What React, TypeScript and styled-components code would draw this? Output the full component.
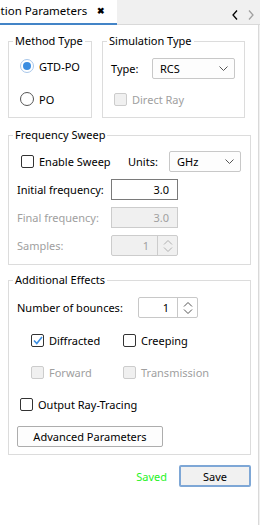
import styled, { createGlobalStyle } from "styled-components";

const GlobalStyle = createGlobalStyle`
  html, body {
    margin: 0;
    padding: 0;
    background: #f0f0f0;
  }
  body {
    font-family: "Noto Sans", "Open Sans", sans-serif;
    font-size: 11px;
    color: #000;
  }
`;

const Window = styled.div`
  width: 260px;
  height: 525px;
  display: flex;
  flex-direction: column;
  overflow: hidden;
`;

const TabBar = styled.div`
  height: 25px;
  display: flex;
  align-items: stretch;
  background: #f0f0f0;
  box-sizing: border-box;
`;

const TabViewport = styled.div`
  width: 117px;
  overflow: hidden;
  display: flex;
`;

const ActiveTab = styled.div`
  flex: none;
  display: flex;
  align-items: center;
  gap: 10px;
  height: 25px;
  padding-right: 18px;
  background: #fff;
  border-bottom: 2px solid #4384c7;
  box-sizing: border-box;
  white-space: nowrap;
  font-size: 11.5px;
  line-height: 14px;
  padding-bottom: 2px;
`;

const CloseMark = styled.span`
  font-weight: bold;
  font-size: 9px;
`;

const TabRest = styled.div`
  flex: 1;
  display: flex;
  align-items: center;
  justify-content: flex-end;
  gap: 10px;
  padding: 6px 6px 0 0;
  border-bottom: 1px solid #d9d9d9;
`;

const Panel = styled.div`
  flex: 1;
  width: 259px;
  background: #fff;
  border-right: 1px solid #d9d9d9;
  box-sizing: border-box;
  padding: 9px 7px 0 8px;
  display: flex;
  flex-direction: column;
`;

const TopRow = styled.div`
  display: flex;
  gap: 10px;
`;

const Group = styled.fieldset<{ $width: number; $gapTop?: number }>`
  margin: ${(p) => p.$gapTop ?? 0}px 0 0 0;
  padding: 0;
  min-width: 0;
  width: ${(p) => p.$width}px;
  box-sizing: border-box;
  border: 1px solid #dcdcdc;
`;

const Legend = styled.legend`
  margin-left: 4px;
  padding: 0 2px;
  line-height: 14px;
  height: 14px;
`;

const GroupBody = styled.div<{ $pt: number; $pb: number; $gap: number }>`
  display: flex;
  flex-direction: column;
  gap: ${(p) => p.$gap}px;
  padding: ${(p) => p.$pt}px 8px ${(p) => p.$pb}px 8px;
`;

const Row = styled.div<{ $h?: number; $indent?: number }>`
  display: flex;
  align-items: center;
  height: ${(p) => p.$h ?? 20}px;
  padding-left: ${(p) => p.$indent ?? 0}px;
`;

const Label = styled.span<{ $w?: number; $disabled?: boolean }>`
  width: ${(p) => (p.$w ? `${p.$w}px` : "auto")};
  flex: none;
  color: ${(p) => (p.$disabled ? "#a0a0a0" : "#000")};
  white-space: nowrap;
`;

const CheckItem = styled.label<{ $w?: number; $disabled?: boolean }>`
  display: flex;
  align-items: center;
  gap: 5px;
  width: ${(p) => (p.$w ? `${p.$w}px` : "auto")};
  color: ${(p) => (p.$disabled ? "#a0a0a0" : "#000")};
  white-space: nowrap;
`;

const Box = styled.span<{ $disabled?: boolean }>`
  width: 13px;
  height: 13px;
  box-sizing: border-box;
  border: 1px solid ${(p) => (p.$disabled ? "#cccccc" : "#333333")};
  border-radius: 2px;
  background: ${(p) => (p.$disabled ? "#f0f0f0" : "#fff")};
  display: flex;
  align-items: center;
  justify-content: center;
  flex: none;
`;

const Radio = styled.span<{ $on?: boolean }>`
  width: 14px;
  height: 14px;
  box-sizing: border-box;
  border-radius: 50%;
  border: 1px solid ${(p) => (p.$on ? "#a8c7ea" : "#555")};
  display: flex;
  align-items: center;
  justify-content: center;
  flex: none;
  &::after {
    content: "";
    width: 8px;
    height: 8px;
    border-radius: 50%;
    background: ${(p) => (p.$on ? "#3b8de0" : "transparent")};
  }
`;

const Select = styled.div<{ $w: number }>`
  width: ${(p) => p.$w}px;
  height: 21px;
  box-sizing: border-box;
  border: 1px solid #c8c8c8;
  border-radius: 2px;
  background: #fdfdfd;
  display: flex;
  align-items: center;
  justify-content: space-between;
  padding: 0 6px 0 7px;
`;

const TextBox = styled.div<{ $w: number; $disabled?: boolean }>`
  width: ${(p) => p.$w}px;
  height: 21px;
  box-sizing: border-box;
  border: 1px solid ${(p) => (p.$disabled ? "#cccccc" : "#7a7a7a")};
  background: ${(p) => (p.$disabled ? "#f0f0f0" : "#fff")};
  color: ${(p) => (p.$disabled ? "#a0a0a0" : "#000")};
  display: flex;
  align-items: center;
  justify-content: flex-end;
  padding-right: 8px;
`;

const Spin = styled.div<{ $w: number; $disabled?: boolean }>`
  width: ${(p) => p.$w}px;
  height: 21px;
  box-sizing: border-box;
  border: 1px solid ${(p) => (p.$disabled ? "#cccccc" : "#c8c8c8")};
  border-radius: 2px;
  background: ${(p) => (p.$disabled ? "#f0f0f0" : "#fff")};
  color: ${(p) => (p.$disabled ? "#a0a0a0" : "#000")};
  display: flex;
  align-items: stretch;
`;

const SpinValue = styled.div`
  flex: 1;
  display: flex;
  align-items: center;
  justify-content: flex-end;
  padding-right: 8px;
`;

const SpinButtons = styled.div<{ $disabled?: boolean }>`
  width: 19px;
  border-left: 1px solid ${(p) => (p.$disabled ? "#cccccc" : "#c8c8c8")};
  display: flex;
  align-items: center;
  justify-content: center;
`;

const Button = styled.button<{ $w: number; $default?: boolean }>`
  width: ${(p) => p.$w}px;
  height: ${(p) => (p.$default ? 22 : 21)}px;
  box-sizing: border-box;
  font: inherit;
  color: #000;
  padding: 0;
  border-radius: 2px;
  border: ${(p) => (p.$default ? "2px solid #7ea7d6" : "1px solid #adadad")};
  background: ${(p) => (p.$default ? "#f1f1f1" : "#fdfdfd")};
`;

const Footer = styled.div`
  display: flex;
  justify-content: flex-end;
  align-items: center;
  gap: 12px;
  margin-top: 10px;
`;

const SavedText = styled.span`
  color: #1ff21f;
`;

const Chevron = ({ dir, color }: { dir: "left" | "right" | "down"; color: string }) => {
  if (dir === "down")
    return (
      <svg width="9" height="5" viewBox="0 0 9 5">
        <path d="M0.5 0.5 L4.5 4.5 L8.5 0.5" fill="none" stroke={color} strokeWidth="1" />
      </svg>
    );
  return (
    <svg width="6" height="10" viewBox="0 0 6 10">
      <path
        d={dir === "left" ? "M5 0.5 L1 5 L5 9.5" : "M1 0.5 L5 5 L1 9.5"}
        fill="none"
        stroke={color}
        strokeWidth="1.3"
      />
    </svg>
  );
};

const SpinArrows = ({ color }: { color: string }) => (
  <svg width="10" height="14" viewBox="0 0 10 14">
    <path d="M1 5.5 L5 1.5 L9 5.5 M1 8.5 L5 12.5 L9 8.5" fill="none" stroke={color} strokeWidth="1" />
  </svg>
);

const Check = () => (
  <svg width="10" height="9" viewBox="0 0 10 9">
    <path d="M1 4.5 L3.8 7.5 L9 1" fill="none" stroke="#3b8de0" strokeWidth="1.6" />
  </svg>
);

function App() {
  return (
    <Window>
      <GlobalStyle />
      <TabBar>
        <TabViewport>
          {/* tab strip is scrolled, so the start of the title is hidden */}
          <ActiveTab style={{ marginLeft: -36 }}>
            <span>Simulation Parameters</span>
            <CloseMark>✖</CloseMark>
          </ActiveTab>
        </TabViewport>
        <TabRest>
          <Chevron dir="left" color="#000" />
          <Chevron dir="right" color="#a0a0a0" />
        </TabRest>
      </TabBar>
      <Panel>
        <TopRow>
          <Group $width={84}>
            <Legend>Method Type</Legend>
            <GroupBody $pt={8} $pb={8} $gap={13}>
              <Row $indent={3}>
                <CheckItem>
                  <Radio $on />
                  GTD-PO
                </CheckItem>
              </Row>
              <Row $indent={3}>
                <CheckItem>
                  <Radio />
                  PO
                </CheckItem>
              </Row>
            </GroupBody>
          </Group>
          <Group $width={143}>
            <Legend>Simulation Type</Legend>
            <GroupBody $pt={10} $pb={7} $gap={10}>
              <Row $h={21}>
                <Label $w={41}>Type:</Label>
                <Select $w={83}>
                  <span>RCS</span>
                  <Chevron dir="down" color="#555" />
                </Select>
              </Row>
              <Row $indent={3}>
                <CheckItem $disabled>
                  <Box $disabled />
                  Direct Ray
                </CheckItem>
              </Row>
            </GroupBody>
          </Group>
        </TopRow>

        <Group $width={243} $gapTop={10}>
          <Legend>Frequency Sweep</Legend>
          <GroupBody $pt={9} $pb={8} $gap={7}>
            <Row $h={21} $indent={4}>
              <CheckItem $w={107}>
                <Box />
                Enable Sweep
              </CheckItem>
              <Label $w={41}>Units:</Label>
              <Select $w={72}>
                <span>GHz</span>
                <Chevron dir="down" color="#555" />
              </Select>
            </Row>
            <Row $h={21}>
              <Label $w={94}>Initial frequency:</Label>
              <TextBox $w={67}>3.0</TextBox>
            </Row>
            <Row $h={21}>
              <Label $w={94} $disabled>
                Final frequency:
              </Label>
              <TextBox $w={67} $disabled>
                3.0
              </TextBox>
            </Row>
            <Row $h={21}>
              <Label $w={94} $disabled>
                Samples:
              </Label>
              <Spin $w={67} $disabled>
                <SpinValue>1</SpinValue>
                <SpinButtons $disabled>
                  <SpinArrows color="#b0b0b0" />
                </SpinButtons>
              </Spin>
            </Row>
          </GroupBody>
        </Group>

        <Group $width={243} $gapTop={8}>
          <Legend>Additional Effects</Legend>
          <GroupBody $pt={10} $pb={7} $gap={12}>
            <Row $h={21}>
              <Label $w={121}>Number of bounces:</Label>
              <Spin $w={60}>
                <SpinValue>1</SpinValue>
                <SpinButtons>
                  <SpinArrows color="#555" />
                </SpinButtons>
              </Spin>
            </Row>
            <Row $indent={14}>
              <CheckItem $w={92}>
                <Box>
                  <Check />
                </Box>
                Diffracted
              </CheckItem>
              <CheckItem>
                <Box />
                Creeping
              </CheckItem>
            </Row>
            <Row $indent={14}>
              <CheckItem $w={92} $disabled>
                <Box $disabled />
                Forward
              </CheckItem>
              <CheckItem $disabled>
                <Box $disabled />
                Transmission
              </CheckItem>
            </Row>
            <Row $indent={3}>
              <CheckItem>
                <Box />
                Output Ray-Tracing
              </CheckItem>
            </Row>
            <Row $h={21}>
              <Button $w={146}>Advanced Parameters</Button>
            </Row>
          </GroupBody>
        </Group>

        <Footer>
          <SavedText>Saved</SavedText>
          <Button $w={72} $default>
            Save
          </Button>
        </Footer>
      </Panel>
    </Window>
  );
}

export default App;
